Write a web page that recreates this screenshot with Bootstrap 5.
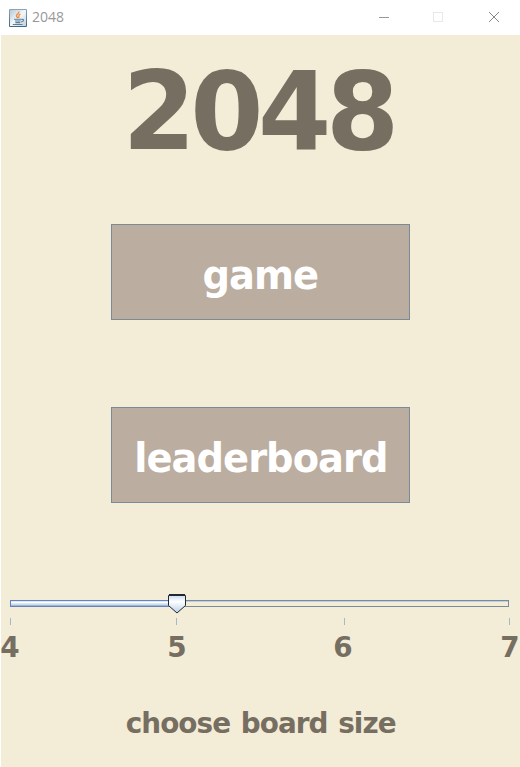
<!DOCTYPE html>
<html lang="en">
<head>
<meta charset="utf-8">
<meta name="viewport" content="width=device-width, initial-scale=1">
<title>2048</title>
<link href="https://cdn.jsdelivr.net/npm/bootstrap@5.3.0/dist/css/bootstrap.min.css" rel="stylesheet">
<style>
body{font-family:"DejaVu Sans",sans-serif;background:#f3ecd7;color:#776e62;height:767px;overflow:hidden}
.titlebar{height:35px;font:14px/35px "Open Sans",sans-serif;color:#999}
.app-icon{margin:0 5px 0 9px}
.title-text{height:37px}
.window{height:732px;border-left:1px solid #fff}
.squeeze{display:inline-block;white-space:nowrap;letter-spacing:-1px;transform:scaleX(.96)}
.logo{font-size:108px;line-height:126px;height:126px;margin:14px 4px 0 0;font-weight:700}
.logo .squeeze{letter-spacing:-5.600px;transform:scaleX(.975)}
.menu-btn,.menu-btn:hover{width:299px;height:96px;border:1px solid #7a8a99;border-radius:0;background:#bbada0;color:#fff;font-size:40px;line-height:46px;font-weight:700;padding:5px 0 0}
.game-btn{margin-top:49px}
.board-btn{margin-top:87px}
.slider{margin-top:90px;height:34px}
.ticks{height:36px;font-size:29px;line-height:36px;font-weight:700;margin:2px 0 0 -1px;width:540px}
.ticks span{width:40px;text-align:center;letter-spacing:0}
.caption{margin-top:40px;font-size:29px;line-height:36px;font-weight:700}
.caption .squeeze{letter-spacing:-.95px;word-spacing:1.800px}
</style>
<script src="https://cdn.jsdelivr.net/npm/bootstrap@5.3.0/dist/js/bootstrap.bundle.min.js"></script>
</head>
<body>
<header class="titlebar d-flex align-items-center bg-white">
  <svg class="app-icon" width="18" height="18" viewBox="0 0 18 18">
    <defs><linearGradient id="tile" x2="0" y2="1"><stop stop-color="#8da5b8"/><stop offset="1" stop-color="#456681"/></linearGradient>
    <linearGradient id="face" x1="0" y1="0" x2="1" y2="1"><stop stop-color="#b5c9d8"/><stop offset=".5" stop-color="#f4f7f9"/><stop offset="1" stop-color="#bfd0dc"/></linearGradient></defs>
    <rect width="18" height="18" rx="1" fill="url(#tile)"/><rect x="1" y="1" width="16" height="16" fill="url(#face)"/>
    <path d="M9.800 2.500C10.500 5 6.600 5.300 7.500 7.300L8.800 9M11.500 5C8.500 6.600 10.700 7.400 9.500 9" fill="none" stroke="#ee8b43" stroke-width="1.4"/>
    <path d="M5 10.200h7.400M6 12h5.600M6.400 13.600h4.800M3.800 15.500h9.700M12.500 10.500c3-.8 2.500 2-.4 2.500" fill="none" stroke="#58809f" stroke-width="1.1"/>
  </svg>
  <span class="title-text">2048</span>
  <svg class="ms-auto" width="141" height="35" viewBox="0 0 141 35" fill="none" shape-rendering="crispEdges">
    <path d="M0 17.500h10" stroke="#999"/>
    <rect x="54.500" y="12.500" width="9" height="9" stroke="#e8e8e8"/>
    <path d="M110 12l10 10M120 12l-10 10" stroke="#888" shape-rendering="auto"/>
  </svg>
</header>
<main class="window d-flex flex-column align-items-center">
  <h1 class="logo"><span class="squeeze">2048</span></h1>
  <button class="btn menu-btn game-btn" type="button"><span class="squeeze">game</span></button>
  <button class="btn menu-btn board-btn" type="button"><span class="squeeze">leaderboard</span></button>
  <svg class="slider flex-shrink-0" width="519" height="34" viewBox="1 593 519 34" shape-rendering="crispEdges">
    <defs><linearGradient id="knob" x2="0" y2="1"><stop stop-color="#c8ddf2"/><stop offset=".35" stop-color="#fff"/><stop offset="1" stop-color="#b8cfe5"/></linearGradient></defs>
    <rect x="10.500" y="600.500" width="498" height="6" fill="none" stroke="#7a8a99"/>
    <path d="M11 601.500h497" stroke="#b8cfe5"/>
    <rect x="10.500" y="600.500" width="166" height="6" fill="#c8ddf2" stroke="#6382bf"/>
    <path d="M11 601.500h165M11 603.500h165" stroke="#dce9f5"/><path d="M11 602.500h165" stroke="#fff"/><path d="M11 605.500h165" stroke="#a3b8cc"/>
    <path d="M168.500 595.500h17v10l-8.500 7.500-8.500-7.500z" fill="url(#knob)" stroke="#222831" shape-rendering="auto"/>
    <path d="M169 595h16" stroke="#222831" stroke-width="2"/>
    <path d="M10.500 618v7M176.500 618v7M344.500 618v7M509.500 618v7" stroke="#a3b8cc"/>
  </svg>
  <div class="ticks d-flex justify-content-between flex-shrink-0">
    <span class="squeeze">4</span><span class="squeeze">5</span><span class="squeeze">6</span><span class="squeeze">7</span>
  </div>
  <div class="caption"><span class="squeeze">choose board size</span></div>
</main>
</body>
</html>
